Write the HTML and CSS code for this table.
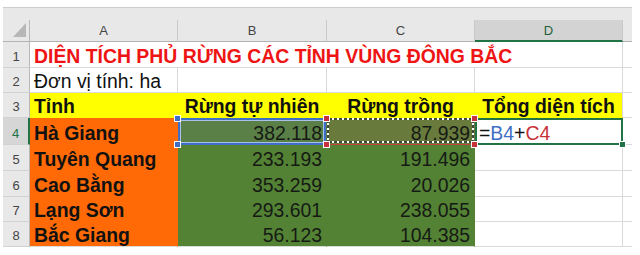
FILE: index.html
```html
<!DOCTYPE html>
<html lang="vi">
<head>
    <meta charset="UTF-8">
    <meta name="viewport" content="width=device-width, initial-scale=1.0">
    <title>Diện tích phủ rừng</title>
    <link rel="stylesheet" href="styles.css">
</head>
<body>
    <div class="sheet">
        <div class="top-strip"></div>

        <div class="grid">
            <!-- column headers -->
            <div class="corner">
                <svg width="13" height="14" viewBox="0 0 13 14"><polygon points="13,0 13,14 0,14" fill="#b7b7b7"/></svg>
            </div>
            <div class="col-head">A</div>
            <div class="col-head">B</div>
            <div class="col-head">C</div>
            <div class="col-head current">D</div>
            <div class="col-head tail"></div>

            <!-- 1 -->
            <div class="row-head">1</div>
            <div class="cell title">DIỆN TÍCH PHỦ RỪNG CÁC TỈNH VÙNG ĐÔNG BẮC</div>
            <div class="cell tail"></div>

            <!-- 2 -->
            <div class="row-head">2</div>
            <div class="cell">Đơn vị tính: ha</div>
            <div class="cell"></div>
            <div class="cell"></div>
            <div class="cell"></div>
            <div class="cell tail"></div>

            <!-- 3 -->
            <div class="row-head">3</div>
            <div class="cell yellow">Tỉnh</div>
            <div class="cell yellow center">Rừng tự nhiên</div>
            <div class="cell yellow center">Rừng trồng</div>
            <div class="cell yellow center last">Tổng diện tích</div>
            <div class="cell tail"></div>

            <!-- 4 -->
            <div class="row-head current">4</div>
            <div class="cell orange">Hà Giang</div>
            <div class="cell green num ref-b">
                382.118
                <span class="knob blue tl"></span>
                <span class="knob blue bl"></span>
            </div>
            <div class="cell green num ref-c">
                87.939
                <span class="knob red tl"></span>
                <span class="knob red tr"></span>
                <span class="knob red bl"></span>
                <span class="knob red br"></span>
            </div>
            <div class="cell active">=<span class="ref-blue">B4</span>+<span class="ref-red">C4</span><span class="fill-knob"></span></div>
            <div class="cell tail"></div>

            <!-- 5 -->
            <div class="row-head">5</div>
            <div class="cell orange">Tuyên Quang</div>
            <div class="cell green num">233.193</div>
            <div class="cell green num">191.496</div>
            <div class="cell"></div>
            <div class="cell tail"></div>

            <!-- 6 -->
            <div class="row-head">6</div>
            <div class="cell orange">Cao Bằng</div>
            <div class="cell green num">353.259</div>
            <div class="cell green num">20.026</div>
            <div class="cell"></div>
            <div class="cell tail"></div>

            <!-- 7 -->
            <div class="row-head">7</div>
            <div class="cell orange">Lạng Sơn</div>
            <div class="cell green num">293.601</div>
            <div class="cell green num">238.055</div>
            <div class="cell"></div>
            <div class="cell tail"></div>

            <!-- 8 -->
            <div class="row-head">8</div>
            <div class="cell orange bottom">Bắc Giang</div>
            <div class="cell green num bottom">56.123</div>
            <div class="cell green num bottom">104.385</div>
            <div class="cell"></div>
            <div class="cell tail"></div>
        </div>
    </div>
</body>
</html>
```

FILE: styles.css
```css
body {
    margin: 0;
    background: #fff;
    font-family: "Liberation Sans", Arial, sans-serif;
}

.sheet {
    padding: 7px 0 0 3px;
}

.top-strip {
    width: 629px;
    height: 13px;
    box-sizing: border-box;
    background: #e8e8e8;
    border-top: 1px solid #cdcdcd;
}

.grid {
    display: grid;
    grid-template-columns: 27px 148px 149px 148px 148px 9px;
    grid-template-rows: 22px 26px 25px 25px 27px 26px 26px 25px 25px;
}

.grid > div {
    box-sizing: border-box;
    display: flex;
    align-items: flex-end;
    min-width: 0;
    white-space: nowrap;
}

/* headers */
.corner {
    background: #e8e8e8;
    justify-content: flex-end;
    padding: 0 3px 4px 0;
    border-right: 1px solid #b9b9b9;
    border-bottom: 1px solid #b3b3b3;
}

.col-head {
    background: #e8e8e8;
    justify-content: center;
    align-items: center !important;
    font-size: 13px;
    color: #444;
    border-right: 1px solid #c9c9c9;
    border-bottom: 1px solid #b3b3b3;
}

.col-head.current {
    background: #d3d3d3;
    color: #1f5e38;
    border-bottom: 2px solid #217346;
}

.col-head.tail {
    border-right: none;
}

.row-head {
    background: #e8e8e8;
    justify-content: center;
    font-size: 13px;
    line-height: 15px;
    padding-bottom: 3px;
    color: #444;
    border-right: 1px solid #b9b9b9;
    border-bottom: 1px solid #d2d2d2;
}

.row-head.current {
    background: #d6d6d6;
    color: #217346;
    border-right: 2px solid #217346;
}

/* cells */
.cell {
    font-size: 19.4px;
    line-height: 20px;
    padding: 0 4px 1px;
    color: #111;
    border-right: 1px solid #dadada;
    border-bottom: 1px solid #dadada;
}

.cell.tail {
    border-right: none;
    padding: 0;
}

.title {
    grid-column: 2 / span 4;
    color: #ee1414;
    font-weight: bold;
}

.yellow {
    background: #ffff00;
    border-color: #ffff00;
    font-weight: bold;
}

.yellow.last {
    border-right-color: #dadada;
}

.center {
    justify-content: center;
}

.orange {
    background: #ff6a07;
    border-color: #ff6a07;
    font-weight: bold;
}

.green {
    background: #538235;
    border-color: #538235;
}

.num {
    justify-content: flex-end;
    color: #161a14;
}

.bottom {
    border-bottom-color: #dadada;
}

/* B4: blue range reference */
.ref-b {
    position: relative;
    background: #5a8047;
    border-color: #5a8047;
}

.ref-b::before {
    content: "";
    position: absolute;
    inset: 0 0 -1px 0;
    border: 2px solid #3f6fc4;
    box-shadow: inset 0 0 0 1px #a9c1ea;
}

/* C4: red range with copy marquee */
.ref-c {
    position: relative;
    background: #697a3d;
    border-color: #697a3d;
}

.ref-c::before {
    content: "";
    position: absolute;
    inset: 0 0 -1px 0;
    border-bottom: 1px solid #c2423c;
    background:
        repeating-linear-gradient(90deg, #fff 0 2px, #3d4a38 2px 5px) top / 100% 2px no-repeat,
        repeating-linear-gradient(90deg, #fff 0 2px, #3d4a38 2px 5px) bottom 1px left 0 / 100% 2px no-repeat,
        repeating-linear-gradient(180deg, #fff 0 2px, #3d4a38 2px 5px) left / 2px 100% no-repeat,
        repeating-linear-gradient(180deg, #fff 0 2px, #3d4a38 2px 5px) right / 2px 100% no-repeat;
}

.knob {
    position: absolute;
    width: 5px;
    height: 5px;
    border: 1px solid #fff;
    z-index: 3;
}

.knob.blue { background: #3f6fc4; }
.knob.red { background: #c8313a; }

.knob.tl { left: -4px; top: -3px; }
.knob.tr { right: -4px; top: -3px; }
.knob.bl { left: -4px; bottom: -4px; }
.knob.br { right: -4px; bottom: -4px; }

/* D4: active cell */
.active {
    position: relative;
}

.active::before {
    content: "";
    position: absolute;
    inset: 0 -1px -1px 0;
    border: 2px solid #217346;
}

.ref-blue { color: #3f6fc4; }
.ref-red { color: #c8313a; }

.fill-knob {
    position: absolute;
    right: -4px;
    bottom: -4px;
    width: 5px;
    height: 5px;
    background: #217346;
    border: 1px solid #fff;
    z-index: 3;
}
```
